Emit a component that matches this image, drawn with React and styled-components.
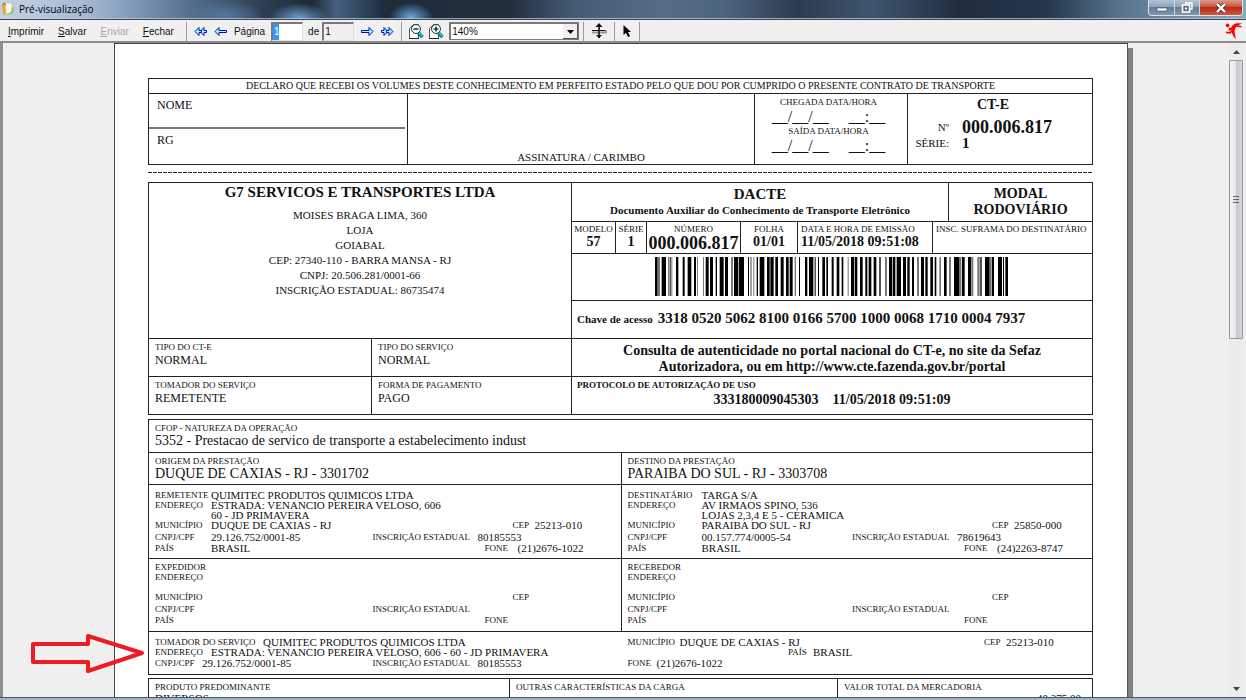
import styled, { createGlobalStyle, css } from 'styled-components';

const GlobalStyle = createGlobalStyle`
	* {
		box-sizing: border-box;
	}

	body {
		margin: 0;
		background: #efefef;
		font-family: 'Liberation Sans', Arial, sans-serif;
		color: #111;
	}

	button,
	input,
	select {
		font-family: inherit;
		color: inherit;
		border-radius: 0;
	}
`;

const WindowStyles = styled.div`
	display: flex;
	flex-direction: column;
	height: 100vh;
	overflow: hidden;
`;

/* ---------- title bar ---------- */

const TitleBarStyles = styled.header`
	display: flex;
	align-items: flex-start;
	height: 20px;
	border-bottom: 1px solid #3c4652;
	background:
		linear-gradient(to bottom, transparent 0 18px, rgba(190, 210, 232, 0.7) 18px),
		radial-gradient(ellipse 30px 16px at 24% 100%, #6ea3d6, transparent),
		radial-gradient(ellipse 22px 14px at 33% 90%, #6aa4dc, transparent),
		radial-gradient(ellipse 40px 14px at 18% 80%, #54769c, transparent),
		linear-gradient(
			to right,
			#c3d3e6 0,
			#a5b9d2 7%,
			#7d96b4 11%,
			#4f6985 16%,
			#2c3f54 21%,
			#1d2a38 25%,
			#45607e 27%,
			#1d2b3a 31%,
			#22303e 41%,
			#455a73 46%,
			#566c86 53%,
			#4d6480 58%,
			#2c3c4f 64%,
			#3f556e 70%,
			#1f2e3e 77%,
			#24374b 84%,
			#5a7490 90%,
			#8da6c2 100%
		);

	h1 {
		flex: 1;
		margin: 0;
		font: 400 10px/18px 'Open Sans', 'Noto Sans', sans-serif;
		color: #000;
	}

	.app-icon {
		margin: 1px 4px 0 1px;
	}
`;

const WindowButtons = styled.div`
	display: flex;
	height: 16px;
	margin-right: 3px;
	border: 1px solid #dbe4ee;
	border-top: 0;
	border-radius: 0 0 4px 4px;
	overflow: hidden;
`;

const WindowButton = styled.button`
	display: flex;
	align-items: center;
	justify-content: center;
	width: ${({ $close }) => ($close ? '43px' : '25px')};
	padding: 0;
	border: 0;
	border-left: ${({ $first }) => ($first ? '0' : '1px solid #cdd8e4')};
	background: ${({ $close }) =>
		$close
			? 'linear-gradient(#dc9a8c, #c9543d 45%, #b52d14 50%, #d2583a)'
			: 'linear-gradient(#b4c3d4, #8fa4bb 45%, #647c96 50%, #7f98b2)'};
`;

/* ---------- toolbar ---------- */

const ToolbarStyles = styled.div`
	display: flex;
	align-items: center;
	height: 23px;
	padding: 1px 3px 0 8px;
	border-bottom: 2px solid #8c8c8c;
	background: #f0f0f0;
	font-size: 10px;

	.logo {
		margin-left: auto;
	}
`;

const MenuButtons = styled.div`
	display: flex;
	gap: 14px;
	margin-right: 8px;
`;

const MenuButton = styled.button`
	padding: 1px 0 0;
	border: 0;
	background: none;
	font-size: 10px;
	line-height: 14px;

	&:disabled {
		color: #a8a8a8;
	}
`;

const IconButton = styled.button`
	display: flex;
	align-items: center;
	justify-content: center;
	width: ${({ $width }) => $width || 20}px;
	height: 20px;
	padding: 0;
	border: 0;
	background: none;
`;

const Separator = styled.span`
	width: 1px;
	height: 19px;
	margin: 0 4px;
	background: #9c9c9c;
`;

const PageField = styled.label`
	display: flex;
	align-items: center;
	gap: 6px;
	margin-left: 3px;

	input {
		width: 32px;
		height: 19px;
		padding: 0 1px 1px;
		border: 1px solid #7a7a7a;
		border-width: 2px 1px 1px 2px;
		border-right-color: #e0e0e0;
		border-bottom-color: #e0e0e0;
		background: ${({ $readOnly }) => ($readOnly ? '#f0f0f0' : 'linear-gradient(to right, #3399ff 6px, #fff 6px)')};
		color: ${({ $readOnly }) => ($readOnly ? '#111' : '#fff')};
		font-size: 10px;
	}
`;

const TotalField = styled(PageField)`
	gap: 3px;
	margin: 0 3px 0 5px;
`;

const ZoomSelect = styled.div`
	position: relative;
	width: 130px;
	height: 18px;
	margin-left: 3px;

	select {
		width: 100%;
		height: 100%;
		padding: 0 0 1px 1px;
		border: 1px solid #7a7a7a;
		border-width: 2px 1px 1px 2px;
		appearance: none;
		background: #fff;
		font-size: 10px;
	}

	svg {
		position: absolute;
		top: 2px;
		right: 1px;
		pointer-events: none;
	}
`;

/* ---------- viewer ---------- */

const ViewerStyles = styled.main`
	display: flex;
	flex: 1;
	min-height: 0;
	padding-right: 3px;
	border-left: 3px solid #8f8f8f;
	background: #efefef;
`;

const Canvas = styled.div`
	flex: 1;
	min-width: 0;
	padding: 0 101px 0 111px;
	overflow: hidden;
`;

const Paper = styled.article`
	min-height: 120vh;
	padding: 34px 34px 60px 33px;
	border: 1px solid #444;
	border-right-color: #555;
	background: #fff;
	box-shadow: 5px 5px 0 #828282;
	font-family: 'Liberation Serif', 'Times New Roman', serif;
`;

const ScrollBar = styled.div`
	display: flex;
	flex-direction: column;
	width: 14px;
	background: #ececec;

	button {
		height: 17px;
		padding: 0;
		border: 0;
		background: none;
		line-height: 0;
	}

	.track {
		flex: 1;
	}

	.thumb {
		display: flex;
		align-items: center;
		justify-content: center;
		height: 45%;
		border: 1px solid #979797;
		border-radius: 1px;
		background: linear-gradient(to right, #f5f5f5, #e6e7ea 45%, #c6c8ce 55%, #d5d6da);
	}
`;

const BottomEdge = styled.footer`
	height: 3px;
	border-top: 1px solid #4c5766;
	background: #9db2cc;
`;

/* ---------- document ---------- */

const line = '1px solid #222';

const Box = styled.section`
	margin-bottom: ${({ $gap }) => $gap || 0}px;
	border: ${line};
`;

const Columns = styled.div`
	display: grid;
	grid-template-columns: ${({ $cols }) => $cols.map((c) => `minmax(0, ${c}fr)`).join(' ')};
	min-height: ${({ $height }) => ($height ? `${$height}px` : '0')};
	border-bottom: ${({ $last }) => ($last ? '0' : line)};

	> * + * {
		border-left: ${({ $plain }) => ($plain ? '1px solid transparent' : line)};
	}
`;

const CutLine = styled.div`
	height: 1px;
	margin: 7px 0 9px;
	background: repeating-linear-gradient(to right, #222 0 4px, transparent 4px 5px);
`;

const Small = styled.span`
	font-size: 9px;
	line-height: 10px;
	font-weight: ${({ $bold }) => ($bold ? 700 : 400)};
	white-space: nowrap;
`;

const ReceiptTitle = styled.p`
	margin: 0;
	border-bottom: ${line};
	font-size: 10px;
	line-height: 14px;
	text-align: center;
	white-space: nowrap;
`;

const SignerSlot = styled.div`
	height: 35px;
	margin-right: 2px;
	padding: 4px 8px;
	border-bottom: ${({ $ruled }) => ($ruled ? '2px solid #777' : '0')};
	font-size: 12px;
	line-height: 14px;
`;

const Signature = styled.div`
	display: flex;
	align-items: flex-end;
	justify-content: center;
	font-size: 11px;
	line-height: 14px;
`;

const Arrival = styled.div`
	display: flex;
	flex-direction: column;
	align-items: center;
	padding: 2px 5px 0 0;

	span {
		line-height: 13px;
	}

	time {
		font-size: 16px;
		line-height: 16px;
		white-space: pre;
	}
`;

const Cte = styled.div`
	display: grid;
	grid-template-columns: 41px 1fr;
	grid-template-rows: 22px 16px 16px;
	column-gap: 13px;
	padding-top: 3px;
	font-size: 11px;
	line-height: 16px;

	h2 {
		grid-column: 1 / 3;
		margin: 0;
		padding-right: 14px;
		font-size: 14px;
		text-align: center;
	}

	span {
		text-align: right;
	}

	strong {
		font-size: 18px;
	}

	strong.serie {
		font-size: 15px;
	}
`;

const Stack = styled.div`
	display: flex;
	flex-direction: column;
`;

const Issuer = styled.div`
	flex: 1;
	border-bottom: ${line};
	font-size: 11px;
	line-height: 15px;
	text-align: center;

	h2 {
		margin: 0 0 7px;
		font-size: 15px;
		line-height: 18px;
	}

	p {
		margin: 0;
	}
`;

const FieldStyles = styled.div`
	display: flex;
	flex-direction: column;
	gap: 1px;
	padding: 3px 6px 0;
	font-size: ${({ $size }) => $size || 12}px;
	line-height: 14px;
`;

const Heading = styled.div`
	padding-top: 3px;
	font-weight: 700;
	font-size: ${({ $size }) => $size}px;
	line-height: 16px;
	text-align: center;

	small {
		display: block;
		font-size: 11px;
	}
`;

const NumberCell = styled.div`
	display: flex;
	flex-direction: column;
	align-items: ${({ $left }) => ($left ? 'flex-start' : 'center')};
	padding: ${({ $left }) => ($left ? '2px 0 0 3px' : '2px 0 0')};

	strong {
		font-size: ${({ $big }) => ($big ? 18 : 14)}px;
		line-height: ${({ $big }) => ($big ? 18 : 16)}px;
	}
`;

const RightRow = styled.div`
	min-height: ${({ $height }) => $height}px;
	border-bottom: ${({ $last }) => ($last ? '0' : line)};
	font-weight: 700;

	${({ $kind }) =>
		$kind === 'barcode' &&
		css`
			padding-top: 3px;
			text-align: center;
			line-height: 0;
		`}

	${({ $kind }) =>
		$kind === 'key' &&
		css`
			display: flex;
			align-items: center;
			gap: 5px;
			padding: 0 0 2px 5px;
			font-size: 11px;
			white-space: nowrap;

			strong {
				font-size: 15px;
			}
		`}

	${({ $kind }) =>
		$kind === 'notice' &&
		css`
			padding-top: 4px;
			font-size: 14px;
			line-height: 16px;
			text-align: center;
		`}

	${({ $kind }) =>
		$kind === 'protocol' &&
		css`
			display: flex;
			flex-direction: column;
			gap: 2px;
			padding: 3px 5px 0;
			font-size: 14px;
			line-height: 16px;

			strong {
				text-align: center;
				white-space: pre;
			}
		`}
`;

const PartyStyles = styled.div`
	padding: ${({ $top, $gutter }) => `${$top}px ${$gutter}px 0 6px`};
`;

const PartyRow = styled.div`
	display: flex;
	height: ${({ $height }) => $height || 10}px;
	font-size: 11px;
	line-height: ${({ $height }) => $height || 10}px;
	white-space: nowrap;

	span {
		line-height: inherit;
	}
`;

const Caption = styled(Small)`
	flex: none;
	width: ${({ $width }) => $width}px;
`;

const Text = styled.div`
	flex: 1;
	min-width: 0;
`;

const Aside = styled.div`
	display: flex;
	flex: none;
	width: ${({ $width }) => $width}px;
`;

const Tomador = styled.div`
	position: relative;

	.pointer {
		position: absolute;
		top: 1px;
		left: -119px;
	}
`;

// start and end of each bar, g marks the thin grey ones
const bars = `0-8 8-15g 20-33 39-42g 44-47 49-52g 63-70 83-89 98-109 117-123 126-129g 144-147g
152-161 165-174 182-186 194-206 210-219 228-234g 237-249 251-267 279-282 286-290g 295-298g
305-309 314-328 336-344 346-356 361-369 377-386 393-401 404-413 419-423g 432-435 450-457
462-475 479-482 489-492 502-510 514-519 530-536 545-553 560-565 578-581g 588-597 599-607
615-623 631-637 641-649 656-664 673-677 690-696g 702-711 713-721 725-738 744-753 757-764
771-777 786-792g 798-807 811-818 826-834 839-844 853-858g 867-875 882-888g 897-912 912-919g
921-929 939-949 950-955g 967-974g 976-980 990-1004 1004-1010g 1011-1017 1029-1041 1044-1047
1051-1059`
	.split(/\s+/)
	.map((bar) => {
		const [from, to] = bar.split('-').map((n) => parseInt(n, 10));
		return { from, width: to - from, grey: bar.endsWith('g') };
	});

const Barcode = () => (
	<svg width="354" height="39" viewBox="0 0 1062 117" role="img" aria-label="Código de barras">
		{bars.map(({ from, width, grey }) => (
			<rect key={from} x={from} width={width} height="117" fill={grey ? '#777' : '#000'} />
		))}
	</svg>
);

const NavArrow = ({ double, right }) => (
	<svg width="13" height="11" viewBox="0 0 13 11">
		<g transform={right ? 'translate(13 0) scale(-1 1)' : undefined} fill="#9ff" stroke="#0a0ab4" strokeWidth="1">
			{double ? (
				<>
					<path d="M6 5.5 10 1.5V4.5H12.5V6.5H10V9.5Z" />
					<path d="M1 5.5 5 1.5V4.5H7.5V6.5H5V9.5Z" />
				</>
			) : (
				<path d="M1 5.5 5 1.5V4.5H12.5V6.5H5V9.5Z" />
			)}
		</g>
	</svg>
);

const ZoomIcon = ({ plus }) => (
	<svg width="16" height="16" viewBox="0 0 16 16">
		<path d="M1.5 15.5V5.5L5.5 1.5H10.5V15.5Z" fill="#fff" stroke="#555" />
		<path d="M1 15.5H11" stroke="#222" />
		<path d="M10 9.5 14.5 14" stroke="#066" strokeWidth="3.4" />
		<path d="M10.5 9.5 14.5 13.5" stroke="#2dd" strokeWidth="1.4" />
		<circle cx="8" cy="6" r="4.5" fill="#e8ffff" stroke="#333" />
		<path d={plus ? 'M5.5 6H10.5M8 3.5V8.5' : 'M5.5 6H10.5'} stroke="#000" strokeWidth="1.2" />
	</svg>
);

const FitIcon = () => (
	<svg width="16" height="16" viewBox="0 0 16 16">
		<path d="M1 9.5H15V7" fill="none" stroke="#999" strokeWidth="2" />
		<path d="M1 7.5H14" stroke="#111" />
		<path d="M8 1V15" stroke="#111" strokeWidth="1.6" />
		<path d="M8 0 11.5 4H4.5ZM8 15 11 12H5Z" fill="#111" />
	</svg>
);

const CursorIcon = () => (
	<svg width="10" height="14" viewBox="0 0 10 14">
		<path d="M1.5 1V11L4 8.8 6 13 8 12.2 6 8H9Z" fill="#000" />
	</svg>
);

const AppIcon = () => (
	<svg className="app-icon" width="14" height="15" viewBox="0 0 14 15">
		<path d="M1 4 6 2V13L2 14Z" fill="#e9a93c" />
		<path d="M4 2H11V12L5 13Z" fill="#f6f6ee" stroke="#c9b878" strokeWidth=".6" />
		<path d="M12.5 6C13.5 11 11 14 6 13.5 9 12.5 10.5 11 11 7Z" fill="#8cc63f" />
		<path d="M1 5 3 2 5 4" fill="none" stroke="#c77f1a" strokeWidth="1.2" />
	</svg>
);

const Logo = () => (
	<svg className="logo" width="18" height="17" viewBox="0 0 18 17">
		<circle cx="2.6" cy="2.4" r="1.8" fill="#f00" />
		<path
			d="M7.6 5 4.6 6.8 4.6 4.4M7.4 7.5 5 9.8 1 9.4M12 3 16.5 3.8"
			fill="none"
			stroke="#f00"
			strokeWidth="1.6"
		/>
		<path d="M17 .6C11-.4 6.4 1.4 6.2 6 6.2 9.6 8.2 13 10.8 16.6 10.2 12 9 8.6 10 6 11 3.4 13 2.2 17 .6Z" fill="#f00" />
	</svg>
);

const Field = ({ label, value, size }) => (
	<FieldStyles $size={size}>
		<Small>{label}</Small>
		<span>{value}</span>
	</FieldStyles>
);

const Party = ({ name, data = {}, labelWidth = 56, gutter = 0, top = 5 }) => (
	<PartyStyles $top={top} $gutter={gutter}>
		<PartyRow>
			<Caption $width={labelWidth}>{name}</Caption>
			<Text>{data.name}</Text>
		</PartyRow>
		<PartyRow>
			<Caption $width={labelWidth}>ENDEREÇO</Caption>
			<Text>{data.street}</Text>
		</PartyRow>
		<PartyRow>
			<Caption $width={labelWidth} />
			<Text>{data.district}</Text>
		</PartyRow>
		<PartyRow $height={11}>
			<Caption $width={labelWidth}>MUNICÍPIO</Caption>
			<Text>{data.city}</Text>
			<Aside $width={100}>
				<Caption $width={22}>CEP</Caption>
				{data.cep}
			</Aside>
		</PartyRow>
		<PartyRow $height={12}>
			<Caption $width={labelWidth}>CNPJ/CPF</Caption>
			<Text>{data.cnpj}</Text>
			<Aside $width={240}>
				<Caption $width={105}>INSCRIÇÃO ESTADUAL</Caption>
				{data.ie}
			</Aside>
		</PartyRow>
		<PartyRow $height={11}>
			<Caption $width={labelWidth}>PAÍS</Caption>
			<Text>{data.country}</Text>
			<Aside $width={128}>
				<Caption $width={33}>FONE</Caption>
				{data.phone}
			</Aside>
		</PartyRow>
	</PartyStyles>
);

const sender = {
	name: 'QUIMITEC PRODUTOS QUIMICOS LTDA',
	street: 'ESTRADA: VENANCIO PEREIRA VELOSO, 606',
	district: '60 - JD PRIMAVERA',
	city: 'DUQUE DE CAXIAS - RJ',
	cep: '25213-010',
	cnpj: '29.126.752/0001-85',
	ie: '80185553',
	country: 'BRASIL',
	phone: '(21)2676-1022',
};

const recipient = {
	name: 'TARGA S/A',
	street: 'AV IRMAOS SPINO, 536',
	district: 'LOJAS 2,3,4 E 5 - CERAMICA',
	city: 'PARAIBA DO SUL - RJ',
	cep: '25850-000',
	cnpj: '00.157.774/0005-54',
	ie: '78619643',
	country: 'BRASIL',
	phone: '(24)2263-8747',
};

const TitleBar = () => (
	<TitleBarStyles>
		<AppIcon />
		<h1>Pré-visualização</h1>
		<WindowButtons>
			<WindowButton $first aria-label="Minimizar">
				<svg width="12" height="10" viewBox="0 0 12 10">
					<rect x="1" y="5" width="10" height="3" fill="#fff" stroke="#555" strokeWidth=".7" />
				</svg>
			</WindowButton>
			<WindowButton aria-label="Restaurar">
				<svg width="12" height="11" viewBox="0 0 12 11">
					<path d="M4 1H11V7H9" fill="none" stroke="#fff" strokeWidth="1.4" />
					<rect x="1.5" y="3" width="7" height="7" fill="#5b6b7c" stroke="#fff" strokeWidth="1.6" />
					<rect x="4" y="5.5" width="2" height="2" fill="#fff" />
				</svg>
			</WindowButton>
			<WindowButton $close aria-label="Fechar janela">
				<svg width="12" height="10" viewBox="0 0 12 10">
					<path d="M2 1 10 9M10 1 2 9" stroke="#5c3430" strokeWidth="4" />
					<path d="M2 1 10 9M10 1 2 9" stroke="#fff" strokeWidth="2.4" />
				</svg>
			</WindowButton>
		</WindowButtons>
	</TitleBarStyles>
);

const Toolbar = () => (
	<ToolbarStyles>
		<MenuButtons>
			<MenuButton><u>I</u>mprimir</MenuButton>
			<MenuButton><u>S</u>alvar</MenuButton>
			<MenuButton disabled><u>E</u>nviar</MenuButton>
			<MenuButton><u>F</u>echar</MenuButton>
		</MenuButtons>
		<Separator />
		<IconButton aria-label="Primeira página"><NavArrow double /></IconButton>
		<IconButton aria-label="Página anterior"><NavArrow /></IconButton>
		<PageField>
			Página
			<input defaultValue="1" />
		</PageField>
		<TotalField $readOnly>
			de
			<input value="1" readOnly />
		</TotalField>
		<IconButton aria-label="Próxima página"><NavArrow right /></IconButton>
		<IconButton aria-label="Última página"><NavArrow double right /></IconButton>
		<Separator />
		<IconButton aria-label="Reduzir"><ZoomIcon /></IconButton>
		<IconButton aria-label="Ampliar"><ZoomIcon plus /></IconButton>
		<ZoomSelect>
			<select aria-label="Zoom" defaultValue="140%">
				<option>100%</option>
				<option>140%</option>
				<option>200%</option>
			</select>
			<svg width="15" height="15" viewBox="0 0 15 15">
				<rect width="15" height="15" fill="#f0f0f0" />
				<path d="M0 14.5H14.5V0" fill="none" stroke="#555" />
				<path d="M4 6H11L7.5 10Z" fill="#000" />
			</svg>
		</ZoomSelect>
		<Separator />
		<IconButton $width={22} aria-label="Ajustar à página"><FitIcon /></IconButton>
		<Separator />
		<IconButton $width={16} aria-label="Selecionar"><CursorIcon /></IconButton>
		<Separator />
		<Logo />
	</ToolbarStyles>
);

const Receipt = () => (
	<Box>
		<ReceiptTitle>
			DECLARO QUE RECEBI OS VOLUMES DESTE CONHECIMENTO EM PERFEITO ESTADO PELO QUE DOU POR CUMPRIDO O PRESENTE
			CONTRATO DE TRANSPORTE
		</ReceiptTitle>
		<Columns $cols={[258, 347, 153, 185]} $height={70} $last>
			<div>
				<SignerSlot $ruled>NOME</SignerSlot>
				<SignerSlot>RG</SignerSlot>
			</div>
			<Signature>ASSINATURA / CARIMBO</Signature>
			<Arrival>
				<Small>CHEGADA DATA/HORA</Small>
				<time>{'__/__/__     __:__'}</time>
				<Small>SAÍDA DATA/HORA</Small>
				<time>{'__/__/__     __:__'}</time>
			</Arrival>
			<Cte>
				<h2>CT-E</h2>
				<span>Nº</span>
				<strong>000.006.817</strong>
				<span>SÉRIE:</span>
				<strong className="serie">1</strong>
			</Cte>
		</Columns>
	</Box>
);

const Dacte = () => (
	<Box $gap={4}>
		<Columns $cols={[422, 521]} $last>
			<Stack>
				<Issuer>
					<h2>G7 SERVICOS E TRANSPORTES LTDA</h2>
					<p>MOISES BRAGA LIMA, 360</p>
					<p>LOJA</p>
					<p>GOIABAL</p>
					<p>CEP: 27340-110 - BARRA MANSA - RJ</p>
					<p>CNPJ: 20.506.281/0001-66</p>
					<p>INSCRIÇÃO ESTADUAL: 86735474</p>
				</Issuer>
				<Columns $cols={[222, 200]} $height={38}>
					<Field label="TIPO DO CT-E" value="NORMAL" />
					<Field label="TIPO DO SERVIÇO" value="NORMAL" />
				</Columns>
				<Columns $cols={[222, 200]} $height={37} $last>
					<Field label="TOMADOR DO SERVIÇO" value="REMETENTE" />
					<Field label="FORMA DE PAGAMENTO" value="PAGO" />
				</Columns>
			</Stack>
			<Stack>
				<Columns $cols={[376, 144]} $height={39}>
					<Heading $size={15}>
						DACTE
						<small>Documento Auxiliar do Conhecimento de Transporte Eletrônico</small>
					</Heading>
					<Heading $size={14}>
						MODAL
						<br />
						RODOVIÁRIO
					</Heading>
				</Columns>
				<Columns $cols={[43, 31, 94, 57, 135, 160]} $height={32}>
					<NumberCell>
						<Small>MODELO</Small>
						<strong>57</strong>
					</NumberCell>
					<NumberCell>
						<Small>SÉRIE</Small>
						<strong>1</strong>
					</NumberCell>
					<NumberCell $big>
						<Small>NÚMERO</Small>
						<strong>000.006.817</strong>
					</NumberCell>
					<NumberCell>
						<Small>FOLHA</Small>
						<strong>01/01</strong>
					</NumberCell>
					<NumberCell $left>
						<Small>DATA E HORA DE EMISSÃO</Small>
						<strong>11/05/2018 09:51:08</strong>
					</NumberCell>
					<NumberCell $left>
						<Small>INSC. SUFRAMA DO DESTINATÁRIO</Small>
					</NumberCell>
				</Columns>
				<RightRow $kind="barcode" $height={47}>
					<Barcode />
				</RightRow>
				<RightRow $kind="key" $height={38}>
					<span>Chave de acesso</span>
					<strong>3318 0520 5062 8100 0166 5700 1000 0068 1710 0004 7937</strong>
				</RightRow>
				<RightRow $kind="notice" $height={38}>
					Consulta de autenticidade no portal nacional do CT-e, no site da Sefaz
					<br />
					Autorizadora, ou em http://www.cte.fazenda.gov.br/portal
				</RightRow>
				<RightRow $kind="protocol" $height={37} $last>
					<Small $bold>PROTOCOLO DE AUTORIZAÇÃO DE USO</Small>
					<strong>{'333180009045303    11/05/2018 09:51:09'}</strong>
				</RightRow>
			</Stack>
		</Columns>
	</Box>
);

const Service = () => (
	<Box $gap={3}>
		<Columns $cols={[1]} $height={33}>
			<Field
				size={14}
				label="CFOP - NATUREZA DA OPERAÇÃO"
				value="5352 - Prestacao de servico de transporte a estabelecimento indust"
			/>
		</Columns>
		<Columns $cols={[1, 1]} $height={32}>
			<Field size={14} label="ORIGEM DA PRESTAÇÃO" value="DUQUE DE CAXIAS - RJ - 3301702" />
			<Field size={14} label="DESTINO DA PRESTAÇÃO" value="PARAIBA DO SUL - RJ - 3303708" />
		</Columns>
		<Columns $cols={[1, 1]} $height={74}>
			<Party name="REMETENTE" data={sender} gutter={8} />
			<Party name="DESTINATÁRIO" data={recipient} labelWidth={74} />
		</Columns>
		<Columns $cols={[1, 1]} $height={73}>
			<Party name="EXPEDIDOR" gutter={8} top={3} />
			<Party name="RECEBEDOR" labelWidth={74} top={3} />
		</Columns>
		<Tomador>
			<Columns $cols={[1, 1]} $height={42} $plain $last>
				<PartyStyles $top={5} $gutter={8}>
					<PartyRow>
						<Caption $width={108}>TOMADOR DO SERVIÇO</Caption>
						<Text>{sender.name}</Text>
					</PartyRow>
					<PartyRow>
						<Caption $width={56}>ENDEREÇO</Caption>
						<Text>
							{sender.street} - {sender.district}
						</Text>
					</PartyRow>
					<PartyRow $height={12}>
						<Caption $width={47}>CNPJ/CPF</Caption>
						<Text>{sender.cnpj}</Text>
						<Aside $width={240}>
							<Caption $width={105}>INSCRIÇÃO ESTADUAL</Caption>
							{sender.ie}
						</Aside>
					</PartyRow>
				</PartyStyles>
				<PartyStyles $top={5} $gutter={8}>
					<PartyRow>
						<Caption $width={52}>MUNICÍPIO</Caption>
						<Text>{sender.city}</Text>
						<Aside $width={100}>
							<Caption $width={22}>CEP</Caption>
							{sender.cep}
						</Aside>
					</PartyRow>
					<PartyRow>
						<Text />
						<Aside $width={296}>
							<Caption $width={25}>PAÍS</Caption>
							{sender.country}
						</Aside>
					</PartyRow>
					<PartyRow $height={12}>
						<Caption $width={29}>FONE</Caption>
						<Text>{sender.phone}</Text>
					</PartyRow>
				</PartyStyles>
			</Columns>
			<svg className="pointer" width="116" height="40" viewBox="0 0 116 40">
				<path
					d="M3 11H58V3L112 20 58 38V29H3Z"
					fill="none"
					stroke="#ed1c24"
					strokeWidth="4"
					strokeLinejoin="round"
				/>
			</svg>
		</Tomador>
	</Box>
);

const CargoField = styled(FieldStyles)`
	gap: 0;
	padding-right: 11px;
	font-size: 11px;
	line-height: 12px;
	text-align: ${({ $right }) => ($right ? 'right' : 'left')};

	span:first-child {
		text-align: left;
	}
`;

const Cargo = () => (
	<Box>
		<Columns $cols={[360, 328, 255]} $height={40} $last>
			<CargoField>
				<Small>PRODUTO PREDOMINANTE</Small>
				<span>DIVERSOS</span>
			</CargoField>
			<CargoField>
				<Small>OUTRAS CARACTERÍSTICAS DA CARGA</Small>
			</CargoField>
			<CargoField $right>
				<Small>VALOR TOTAL DA MERCADORIA</Small>
				<span>40.375,00</span>
			</CargoField>
		</Columns>
	</Box>
);

const App = () => {
	return (
		<>
			<GlobalStyle />
			<WindowStyles>
				<TitleBar />
				<Toolbar />
				<ViewerStyles>
					<Canvas>
						<Paper>
							<Receipt />
							<CutLine />
							<Dacte />
							<Service />
							<Cargo />
						</Paper>
					</Canvas>
					<ScrollBar>
						<button aria-label="Rolar para cima">
							<svg width="7" height="4" viewBox="0 0 7 4"><path d="M0 4H7L3.5 0Z" fill="#444" /></svg>
						</button>
						<div className="track">
							<div className="thumb">
								<svg width="6" height="7" viewBox="0 0 6 7">
									<path d="M0 .5H6M0 3.5H6M0 6.5H6" stroke="#666" />
								</svg>
							</div>
						</div>
						<button aria-label="Rolar para baixo">
							<svg width="7" height="4" viewBox="0 0 7 4"><path d="M0 0H7L3.5 4Z" fill="#444" /></svg>
						</button>
					</ScrollBar>
				</ViewerStyles>
				<BottomEdge />
			</WindowStyles>
		</>
	);
};

export default App;
